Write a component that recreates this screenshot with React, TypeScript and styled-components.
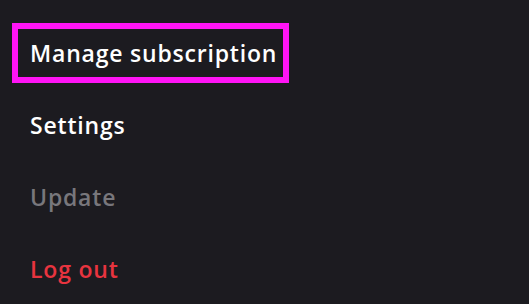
import React from 'react';
import styled, { createGlobalStyle } from 'styled-components';

const GlobalStyle = createGlobalStyle`
    html, body {
        margin: 0;
        padding: 0;
        background: #1c1b20;
    }
    body {
        font-family: "Open Sans", Lato, sans-serif;
    }
`

type Tone = 'normal' | 'muted' | 'danger'

const items: { label: string; tone: Tone; selected?: boolean }[] = [
    { label: 'Manage subscription', tone: 'normal', selected: true },
    { label: 'Settings', tone: 'normal' },
    { label: 'Update', tone: 'muted' },
    { label: 'Log out', tone: 'danger' },
]

const toneColour: Record<Tone, string> = {
    normal: '#ffffff',
    muted: '#78777c',
    danger: '#e8343f',
}

function App() {
    return (
        <>
            <GlobalStyle />
            <Page>
                <Menu>
                    {items.map(item => (
                        <MenuItem key={item.label} $selected={!!item.selected} $tone={item.tone}>
                            {item.label}
                        </MenuItem>
                    ))}
                </Menu>
            </Page>
        </>
    );
}

const Page = styled.div`
    width: 529px;
    height: 304px;
    background: #1c1b20;
    overflow: hidden;
`

const Menu = styled.ul`
    list-style: none;
    margin: 0;
    padding: 23px 0 0 12px;
    display: flex;
    flex-direction: column;
    align-items: flex-start;
    gap: 12px;
`

const MenuItem = styled.li<{ $selected: boolean; $tone: Tone }>`
    box-sizing: border-box;
    height: 60px;
    display: flex;
    align-items: center;
    padding: 0 6px 0 12px;
    border: 6px solid ${props => props.$selected ? '#ff14f5' : 'transparent'};
    color: ${props => toneColour[props.$tone]};
    font-size: 23px;
    font-weight: 600;
    letter-spacing: 0.8px;
`

export default App;
